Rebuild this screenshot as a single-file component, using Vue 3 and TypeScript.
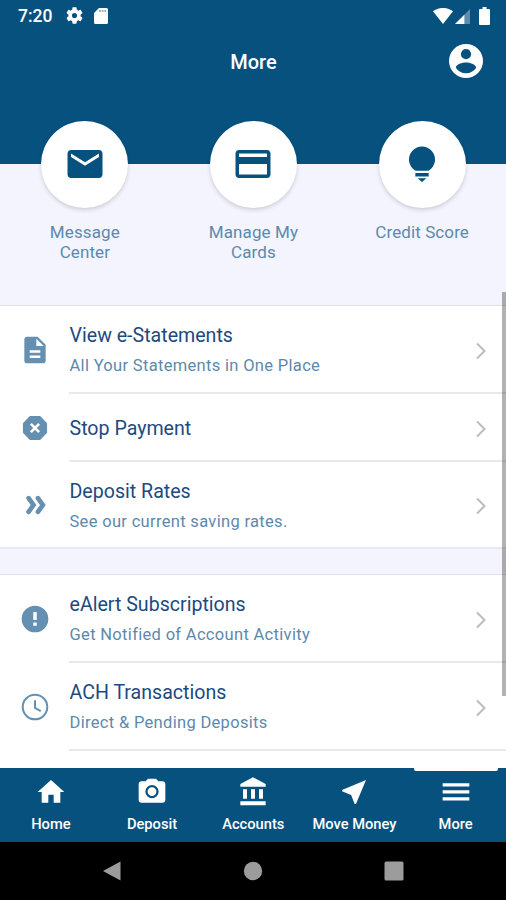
<script setup lang="ts">
interface Shortcut {
  id: 'mail' | 'card' | 'bulb'
  label: string
}
interface Row {
  id: string
  title: string
  note?: string
}
interface Tab {
  id: string
  label: string
  path: string
  active?: boolean
}

const shortcuts: Shortcut[] = [
  { id: 'mail', label: 'Message Center' },
  { id: 'card', label: 'Manage My Cards' },
  { id: 'bulb', label: 'Credit Score' },
]

const groups: Row[][] = [
  [
    { id: 'doc', title: 'View e-Statements', note: 'All Your Statements in One Place' },
    { id: 'stop', title: 'Stop Payment' },
    { id: 'rates', title: 'Deposit Rates', note: 'See our current saving rates.' },
  ],
  [
    { id: 'alert', title: 'eAlert Subscriptions', note: 'Get Notified of Account Activity' },
    { id: 'clock', title: 'ACH Transactions', note: 'Direct & Pending Deposits' },
  ],
]

const tabs: Tab[] = [
  { id: 'home', label: 'Home', path: 'M10 20v-6h4v6h5v-8h3L12 3 2 12h3v8z' },
  {
    id: 'deposit',
    label: 'Deposit',
    path: 'M9 2L7.2 4H4c-1.100 0-2 .9-2 2v12c0 1.100.9 2 2 2h16c1.100 0 2-.9 2-2V6c0-1.100-.9-2-2-2h-3.200L15 2H9zm3 14.700a5 5 0 1 1 0-10 5 5 0 0 1 0 10zm0-1.700a3.300 3.300 0 1 0 0-6.600 3.300 3.300 0 0 0 0 6.600z',
  },
  {
    id: 'accounts',
    label: 'Accounts',
    path: 'M4.500 10v7h3v-7h-3zm6 0v7h3v-7h-3zM2.500 22h19v-3h-19v3zm14-12v7h3v-7h-3zM12 1L2.500 6v2h19V6L12 1z',
  },
  { id: 'move', label: 'Move Money', path: 'M21 3L3 10.530v.98l6.840 2.650L12.480 21h.98L21 3z' },
  { id: 'more', label: 'More', path: 'M2 5.500h20v2.400H2zM2 10.700h20v2.400H2zM2 15.900h20v2.400H2z', active: true },
]
</script>

<template>
  <div class="screen">
    <header class="header">
      <div class="status">
        <span class="time">7:20</span>
        <svg class="gear" viewBox="2 2 20 20">
          <path d="M19.140 12.940c.04-.3.060-.61.060-.94 0-.32-.02-.64-.07-.94l2.030-1.580a.49.49 0 0 0 .12-.61l-1.920-3.320a.488.488 0 0 0-.59-.22l-2.390.96c-.5-.38-1.030-.7-1.620-.94l-.36-2.540a.484.484 0 0 0-.48-.41h-3.840c-.24 0-.43.17-.47.41l-.36 2.540c-.59.24-1.130.57-1.620.94l-2.390-.96c-.22-.08-.47 0-.59.22L2.740 8.870c-.12.21-.08.47.12.61l2.030 1.580c-.05.3-.09.63-.09.94s.02.64.07.94l-2.030 1.580a.49.49 0 0 0-.12.61l1.920 3.320c.12.22.37.29.59.22l2.390-.96c.5.38 1.030.7 1.620.94l.36 2.540c.05.24.24.41.48.41h3.840c.24 0 .44-.17.47-.41l.36-2.540c.59-.24 1.130-.56 1.620-.94l2.390.96c.22.08.47 0 .59-.22l1.920-3.320c.12-.22.07-.47-.12-.61l-2.010-1.580zM12 15a3 3 0 1 1 0-6 3 3 0 0 1 0 6z" />
        </svg>
        <svg class="sd" viewBox="0 0 14 16">
          <path d="M5 0h7.500A1.500 1.500 0 0 1 14 1.500v13a1.500 1.500 0 0 1-1.500 1.500h-11A1.500 1.500 0 0 1 0 14.500V5z" />
          <path class="sd-pins" d="M5 2h1.800v2H5zM7.700 2h1.800v2H7.700zM10.400 2h1.600v2h-1.600z" />
        </svg>
        <span class="spacer" />
        <svg class="wifi" viewBox="0 0 20 16"><path d="M0 3.200C5.600-1.100 14.400-1.100 20 3.200L10 16z" /></svg>
        <svg class="signal" viewBox="0 0 16 16">
          <path opacity=".35" d="M16 0v16H0z" />
          <path d="M10 6v10H0z" />
        </svg>
        <svg class="battery" viewBox="0 0 11 18">
          <path d="M3.500 0h4v2H10a1 1 0 0 1 1 1v14a1 1 0 0 1-1 1H1a1 1 0 0 1-1-1V3a1 1 0 0 1 1-1h2.500z" />
        </svg>
      </div>
      <div class="titlebar">
        <h1>More</h1>
        <svg class="account" viewBox="2 2 20 20">
          <path d="M12 2a10 10 0 1 0 0 20 10 10 0 0 0 0-20zm0 3a3 3 0 1 1 0 6 3 3 0 0 1 0-6zm0 14.200a7.200 7.200 0 0 1-6-3.220c.03-1.990 4-3.080 6-3.080 1.990 0 5.970 1.090 6 3.080a7.200 7.200 0 0 1-6 3.220z" />
        </svg>
      </div>
    </header>

    <main class="content">
      <section class="shortcuts">
        <div v-for="s in shortcuts" :key="s.id" class="shortcut">
          <div class="disc">
            <svg viewBox="0 0 24 24">
              <path v-if="s.id === 'mail'" d="M20 4H4c-1.100 0-1.990.9-1.990 2L2 18c0 1.100.9 2 2 2h16c1.100 0 2-.9 2-2V6c0-1.100-.9-2-2-2zm0 4l-8 5-8-5V6l8 5 8-5v2z" />
              <path v-else-if="s.id === 'card'" d="M20 4H4c-1.110 0-1.990.89-1.990 2L2 18c0 1.110.89 2 2 2h16c1.110 0 2-.89 2-2V6c0-1.110-.89-2-2-2zm0 14H4v-6h16v6zm0-10H4V6h16v2z" />
              <path v-else d="M8.300 15.900A7.450 7.450 0 1 1 15.700 15.900zM8.200 17.100h7.600v2.100H8.200zM9.500 20.100h5L12 22.300z" />
            </svg>
          </div>
          <span class="caption">{{ s.label }}</span>
        </div>
      </section>

      <section v-for="(group, i) in groups" :key="i" class="group">
        <div v-for="row in group" :key="row.id" class="row" :class="{ single: !row.note }">
          <svg class="glyph" viewBox="0 0 24 24">
            <path v-if="row.id === 'doc'" d="M14 2H6c-1.100 0-1.990.9-1.990 2L4 20c0 1.100.89 2 1.990 2H18c1.100 0 2-.9 2-2V8l-6-6zm2 16H8v-1.900h8V18zm0-4H8v-1.900h8V14zm-3-5V3.500L18.500 9H13z" />
            <g v-else-if="row.id === 'stop'">
              <path d="M8.500 3.400h7L20.600 8.500v7L15.500 20.600H8.500L3.400 15.500V8.500z" stroke="#6690b1" stroke-width=".9" stroke-linejoin="round" />
              <path class="cut" d="M8.900 8.900l6.200 6.200M15.100 8.900l-6.200 6.200" />
            </g>
            <path v-else-if="row.id === 'rates'" class="arrows" d="M7.200 6.900L10.900 12L7.200 17.100M14.200 6.900L17.900 12L14.200 17.100" />
            <path v-else-if="row.id === 'alert'" d="M12 2a10 10 0 1 0 0 20 10 10 0 0 0 0-20zm1.300 15h-2.600v-2.400h2.600v2.400zm0-4.300h-2.600V6.700h2.600v6z" />
            <path v-else class="clock" d="M12 2.800a9.200 9.200 0 1 0 0 18.400 9.200 9.200 0 0 0 0-18.400zM12 7v5.700l4.300 2.400" />
          </svg>
          <div class="body">
            <div class="text">
              <span class="title">{{ row.title }}</span>
              <span v-if="row.note" class="note">{{ row.note }}</span>
            </div>
            <svg class="chevron" viewBox="0 0 12 18"><path d="M2 1.500L9.500 9L2 16.500" /></svg>
          </div>
        </div>
      </section>
      <div class="scrollbar" />
    </main>

    <nav class="tabs">
      <div v-for="t in tabs" :key="t.id" class="tab" :class="{ active: t.active }">
        <svg viewBox="0 0 24 24"><path fill-rule="evenodd" :d="t.path" /></svg>
        <span>{{ t.label }}</span>
      </div>
    </nav>

    <footer class="system">
      <svg viewBox="0 0 20 20"><path d="M1 10L18.500 0.500V19.500z" /></svg>
      <svg viewBox="0 0 20 20"><circle cx="10" cy="10" r="9.200" /></svg>
      <svg viewBox="0 0 20 20"><rect x="0.500" y="0.500" width="19" height="19" rx="1.500" /></svg>
    </footer>
  </div>
</template>

<style>
body {
  margin: 0;
}
</style>

<style scoped>
.screen {
  display: flex;
  flex-direction: column;
  width: 506px;
  height: 900px;
  overflow: hidden;
  background: #f3f4fd;
  font-family: Roboto, "Liberation Sans", sans-serif;
}
svg {
  display: block;
  flex: none;
  fill: currentColor;
}
.header {
  flex: none;
  height: 163.500px;
  background: #07517f;
  color: #fff;
}
.status {
  display: flex;
  align-items: center;
  height: 31px;
  padding: 0 16px 0 18px;
}
.time {
  width: 39px;
  font-size: 17.500px;
  font-weight: 500;
  line-height: 31px;
  padding-top: 1px;
}
.gear {
  width: 17px;
  height: 17px;
  margin-left: 8.500px;
}
.sd {
  width: 14px;
  height: 16px;
  margin-left: 11.500px;
}
.sd-pins {
  fill: #8fb0c8;
}
.spacer {
  flex: 1;
}
.wifi {
  width: 20px;
  height: 16px;
}
.signal {
  width: 15px;
  height: 15px;
  margin: 1px 9px 0 2px;
}
.battery {
  width: 11px;
  height: 18px;
}
.titlebar {
  display: grid;
  grid-template-columns: 1fr auto 1fr;
  align-items: center;
  height: 60px;
  padding: 0 23px 0 24px;
}
h1 {
  grid-column: 2;
  margin: 1px 0 0;
  font-size: 20px;
  font-weight: 500;
  line-height: 24px;
}
.account {
  justify-self: end;
  width: 34px;
  height: 34px;
}
.content {
  position: relative;
  flex: none;
  height: 604.500px;
}
.shortcuts {
  display: grid;
  grid-template-columns: repeat(3, 168.670px);
  height: 184.500px;
  margin-top: -43px;
  padding-left: 0.500px;
}
.shortcut {
  display: flex;
  flex-direction: column;
  align-items: center;
}
.disc {
  display: grid;
  place-items: center;
  width: 87px;
  height: 87px;
  border-radius: 50%;
  background: #fff;
  color: #07517f;
  box-shadow: 0 2px 4px rgba(0, 0, 0, 0.16);
}
.disc svg {
  width: 42px;
  height: 42px;
}
.caption {
  width: 110px;
  margin-top: 14px;
  color: #5d89ad;
  font-size: 17px;
  line-height: 20px;
  letter-spacing: 0.100px;
  text-align: center;
}
.group {
  border-top: 1px solid #dfdfe4;
  background: #fff;
}
.group + .group {
  margin-top: 25px;
  height: 194px;
}
.row {
  display: flex;
  align-items: center;
  height: 88px;
  padding-left: 19px;
}
.row.single {
  height: 68px;
}
.glyph {
  width: 32px;
  height: 32px;
  color: #6690b1;
}
.cut {
  fill: none;
  stroke: #fff;
  stroke-width: 2;
}
.arrows {
  fill: none;
  stroke: currentColor;
  stroke-width: 3.500;
  stroke-linecap: round;
}
.clock {
  fill: none;
  stroke: currentColor;
  stroke-width: 1.500;
}
.body {
  display: flex;
  flex: 1;
  align-items: center;
  justify-content: space-between;
  box-sizing: border-box;
  height: 100%;
  margin-left: 18px;
  padding-right: 19px;
  border-bottom: 2px solid #e9e9eb;
}
.group:not(.group + .group) .row:last-child {
  box-sizing: border-box;
  height: 87px;
  border-bottom: 2px solid #e9e9ef;
}
.group:not(.group + .group) .row:last-child .body {
  border-bottom: 0;
}
.text {
  display: flex;
  flex-direction: column;
  padding: 4px 0 0 0.500px;
}
.title {
  color: #1c4a80;
  font-size: 19.600px;
  line-height: 30px;
}
.note {
  color: #5d89ad;
  font-size: 16.500px;
  line-height: 30px;
  letter-spacing: 0.320px;
}
.chevron {
  width: 12px;
  height: 18px;
  margin-top: 4px;
  fill: none;
  stroke: #bcbcbc;
  stroke-width: 2;
}
.group:not(.group + .group) .row:last-child .chevron {
  margin-top: 2px;
}
.scrollbar {
  position: absolute;
  top: 128.500px;
  right: 0;
  width: 4px;
  height: 404px;
  background: rgba(0, 0, 0, 0.3);
}
.tabs {
  z-index: 1;
  display: grid;
  grid-template-columns: repeat(5, 1fr);
  flex: none;
  height: 74px;
  background: #07517f;
  color: #fff;
}
.tab {
  position: relative;
  display: flex;
  flex-direction: column;
  align-items: center;
  padding: 8px 0 0 0.500px;
}
.tab svg {
  width: 32px;
  height: 32px;
}
.tab span {
  margin-top: 6px;
  font-size: 14.700px;
  font-weight: 500;
  line-height: 20px;
  white-space: nowrap;
}
.tab.active::before {
  content: "";
  position: absolute;
  top: -1px;
  left: 9px;
  width: 84px;
  height: 4px;
  border-radius: 0 0 2px 2px;
  background: #fff;
}
.system {
  display: flex;
  flex: 1;
  justify-content: space-between;
  align-items: center;
  box-sizing: border-box;
  padding: 0 102px 0 102px;
  background: #000;
  color: #9c9c9c;
}
.system svg {
  width: 20px;
  height: 20px;
}
</style>
